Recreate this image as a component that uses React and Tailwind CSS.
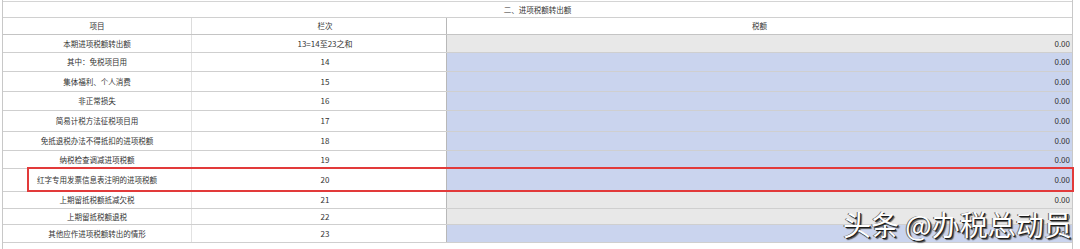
import React from "react";

const rows = [
  { name: "本期进项税额转出额", col: "13=14至23之和", h: "h-[18px]", bg: "bg-[#e8e8e8]" },
  { name: "其中：免税项目用", col: "14", h: "h-[19px]", bg: "bg-[#cad4ee]" },
  { name: "集体福利、个人消费", col: "15", h: "h-[20px]", bg: "bg-[#cad4ee]" },
  { name: "非正常损失", col: "16", h: "h-[19px]", bg: "bg-[#cad4ee]" },
  { name: "简易计税方法征税项目用", col: "17", h: "h-[21px]", bg: "bg-[#cad4ee]" },
  { name: "免抵退税办法不得抵扣的进项税额", col: "18", h: "h-[19px]", bg: "bg-[#cad4ee]" },
  { name: "纳税检查调减进项税额", col: "19", h: "h-[18px]", bg: "bg-[#cad4ee]" },
  { name: "红字专用发票信息表注明的进项税额", col: "20", h: "h-[23px]", bg: "bg-[#cad4ee]" },
  { name: "上期留抵税额抵减欠税", col: "21", h: "h-[17px]", bg: "bg-[#e8e8e8]" },
  { name: "上期留抵税额退税", col: "22", h: "h-[16px]", bg: "bg-[#e8e8e8]" },
  { name: "其他应作进项税额转出的情形", col: "23", h: "h-[18px]", bg: "bg-[#cad4ee]" },
];

export default function App() {
  return (
    <div
      className="relative w-[1080px] h-[249px] overflow-hidden bg-white text-[#333] text-[7.5px]"
      style={{ fontFamily: '"Noto Sans CJK SC", "Noto Sans", sans-serif' }}
    >
      <div className="ml-[2px] w-[1071px] border-l border-r border-[#c8c8c8]">
        {/* top partial row */}
        <div className="h-[2px] border-b border-[#d4d4d4]" />
        {/* title */}
        <div className="h-[16px] border-b border-[#d0d0d0] flex items-center justify-center">
          二、进项税额转出额
        </div>
        {/* header */}
        <div className="h-[17px] border-b border-[#c4c4c4] flex">
          <div className="w-[189px] border-r border-[#dcdcdc] flex items-center justify-center">项目</div>
          <div className="w-[255px] border-r border-[#b8b8b8] flex items-center justify-center pl-[12px]">栏次</div>
          <div className="flex-1 flex items-center justify-center">税额</div>
        </div>
        {rows.map((r, i) => (
          <div key={i} className={`${r.h} border-b border-[#cfcfcf] flex`}>
            <div className="w-[189px] border-r border-[#e2e2e2] flex items-center justify-center">{r.name}</div>
            <div className="w-[255px] border-r border-[#b8b8b8] flex items-center justify-center pl-[12px] text-[8px]">{r.col}</div>
            <div className={`flex-1 ${r.bg} flex items-center justify-end pr-[2px] text-[8px]`}>0.00</div>
          </div>
        ))}
        <div className="h-[10px]" />
      </div>

      {/* red highlight box */}
      <div className="absolute left-[27px] top-[167px] w-[1047px] h-[25px] border-2 border-[#e23a3a]" />

      {/* watermark */}
      <div
        className="absolute left-[843px] top-[210px] text-[28px] leading-none text-white whitespace-nowrap [text-shadow:1px_1px_0_#1a1a1a,2px_2px_1px_#555,-1px_0_0_#666]"
      >
        头条 @办税总动员
      </div>
    </div>
  );
}
